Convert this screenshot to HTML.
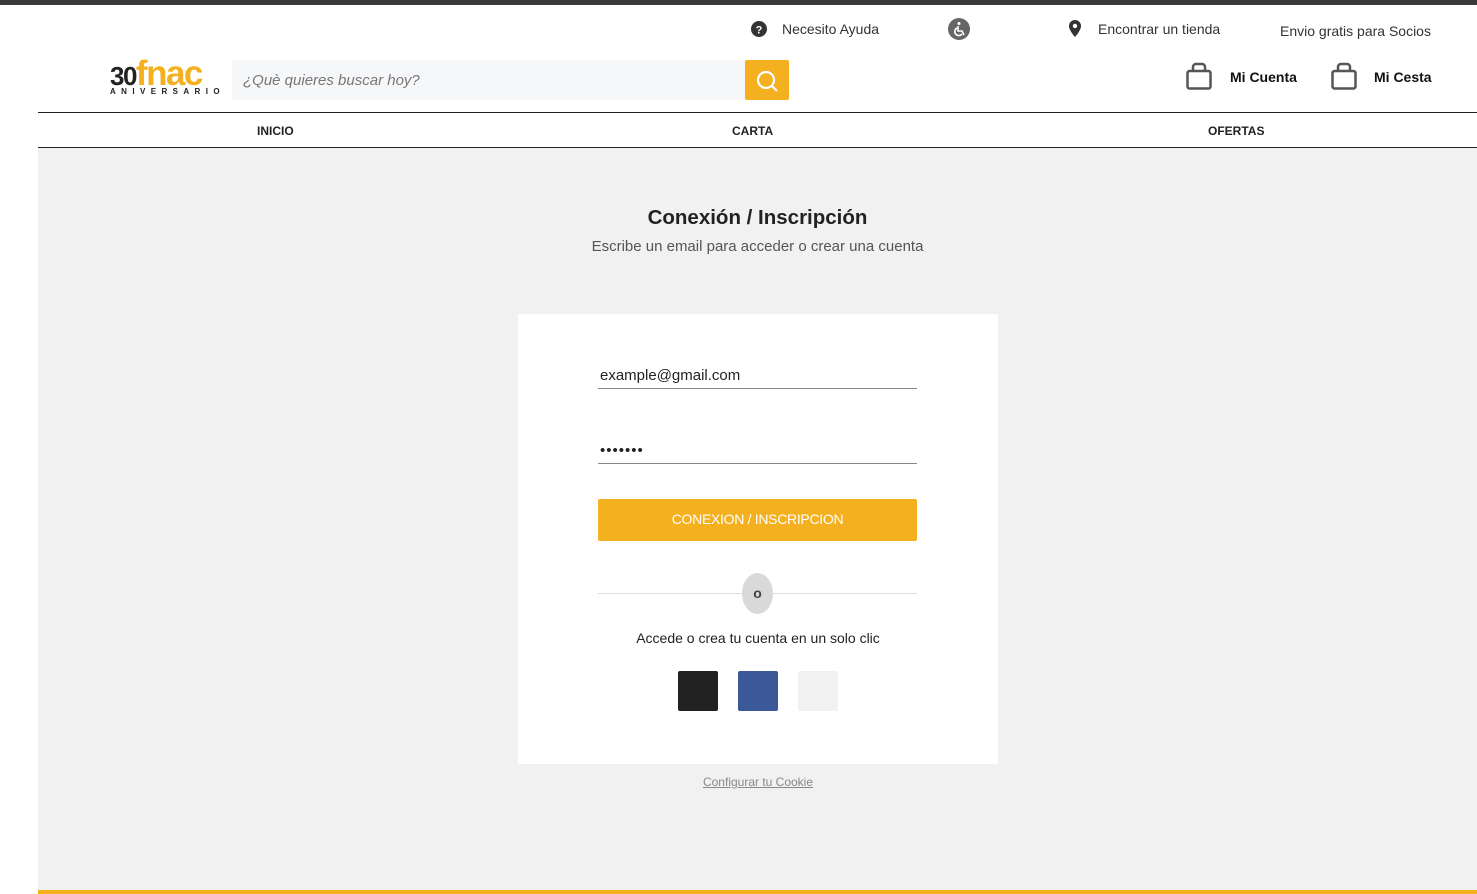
<!DOCTYPE html>
<html><head><meta charset="utf-8"><style>
*{margin:0;padding:0;box-sizing:border-box}
body{width:1477px;height:894px;position:relative;background:#fff;font-family:"Liberation Sans",sans-serif;overflow:hidden;color:#222}
.a{position:absolute}
</style></head><body>
<div class="a" style="left:0;top:0;width:1477px;height:5px;background:#3a3a3a"></div>
<svg class="a" style="left:751px;top:21px" width="16" height="16" viewBox="0 0 16 16"><circle cx="8" cy="8" r="8" fill="#333"/><text x="8" y="12.5" font-size="11" font-weight="bold" fill="#fff" text-anchor="middle" font-family="Liberation Sans">?</text></svg>
<div class="a" style="left:782px;top:21px;font-size:14px;color:#333">Necesito Ayuda</div>
<svg class="a" style="left:948px;top:18px" width="22" height="22" viewBox="0 0 22 22"><circle cx="11" cy="11" r="11" fill="#666"/><circle cx="11" cy="5.5" r="1.5" fill="#fff"/><path d="M10 8v5h4l2 4M9 10a4 4 0 1 0 5 6" stroke="#fff" stroke-width="1.6" fill="none"/></svg>
<svg class="a" style="left:1068px;top:20px" width="14" height="17" viewBox="0 0 14 17"><path d="M7 0a6 6 0 0 0-6 6c0 4.5 6 11 6 11s6-6.5 6-11a6 6 0 0 0-6-6z" fill="#333"/><circle cx="7" cy="6" r="2.2" fill="#fff"/></svg>
<div class="a" style="left:1098px;top:21px;font-size:14px;color:#333">Encontrar un tienda</div>
<div class="a" style="left:1280px;top:23px;font-size:14px;color:#333">Envio gratis para Socios</div>
<div class="a" style="left:110px;top:54px;font-size:35px;font-weight:bold;color:#f5b01f;letter-spacing:-1.5px;line-height:40px"><span style="color:#222;font-size:26px">30</span>fnac</div>
<div class="a" style="left:110px;top:87px;font-size:8px;font-weight:bold;letter-spacing:5.4px;color:#222">ANIVERSARIO</div>
<div class="a" style="left:232px;top:60px;width:514px;height:40px;background:#f6f7f9"></div>
<div class="a" style="left:243px;top:72px;font-size:15px;font-style:italic;color:#777">¿Què quieres buscar hoy?</div>
<div class="a" style="left:745px;top:60px;width:44px;height:40px;background:#f5b01f;border-radius:2px"></div>
<svg class="a" style="left:755px;top:69px" width="24" height="24" viewBox="0 0 24 24"><circle cx="11" cy="11" r="8" stroke="#fff" stroke-width="2.2" fill="none"/><path d="M17 17l5 5" stroke="#fff" stroke-width="2.2"/></svg>
<svg class="a" style="left:1186px;top:62px" width="26" height="28" viewBox="0 0 26 28"><rect x="1.5" y="9" width="23" height="17.5" rx="2" stroke="#555" stroke-width="2.5" fill="none"/><path d="M7 9V5a3 3 0 0 1 3-3h6a3 3 0 0 1 3 3v4" stroke="#555" stroke-width="2.5" fill="none"/></svg>
<div class="a" style="left:1230px;top:69px;font-size:14px;font-weight:bold;color:#111">Mi Cuenta</div>
<svg class="a" style="left:1331px;top:62px" width="26" height="28" viewBox="0 0 26 28"><rect x="1.5" y="9" width="23" height="17.5" rx="2" stroke="#555" stroke-width="2.5" fill="none"/><path d="M7 9V5a3 3 0 0 1 3-3h6a3 3 0 0 1 3 3v4" stroke="#555" stroke-width="2.5" fill="none"/></svg>
<div class="a" style="left:1374px;top:69px;font-size:14px;font-weight:bold;color:#111">Mi Cesta</div>
<div class="a" style="left:38px;top:112px;width:1439px;height:1px;background:#222"></div>
<div class="a" style="left:257px;top:124px;font-size:12px;font-weight:bold;color:#222">INICIO</div>
<div class="a" style="left:732px;top:124px;font-size:12px;font-weight:bold;color:#222">CARTA</div>
<div class="a" style="left:1208px;top:124px;font-size:12px;font-weight:bold;color:#222">OFERTAS</div>
<div class="a" style="left:38px;top:147px;width:1439px;height:1px;background:#222"></div>
<div class="a" style="left:38px;top:148px;width:1439px;height:742px;background:#f1f1f1"></div>
<div class="a" style="left:38px;top:890px;width:1439px;height:4px;background:#f5b01f"></div>
<div class="a" style="left:0;top:206px;width:1515px;text-align:center;font-size:20.5px;font-weight:bold;color:#222">Conexión / Inscripción</div>
<div class="a" style="left:0;top:238px;width:1515px;text-align:center;font-size:15px;color:#555">Escribe un email para acceder o crear una cuenta</div>
<div class="a" style="left:518px;top:314px;width:480px;height:450px;background:#fff"></div>
<div class="a" style="left:600px;top:367px;font-size:15px;color:#222">example@gmail.com</div>
<div class="a" style="left:598px;top:388px;width:319px;height:1px;background:#888"></div>
<div class="a" style="left:600px;top:442px;font-size:15px;color:#222;letter-spacing:1px">•••••••</div>
<div class="a" style="left:598px;top:463px;width:319px;height:1px;background:#888"></div>
<div class="a" style="left:598px;top:499px;width:319px;height:42px;background:#f5b01f;border-radius:2px;color:#fff;font-size:14px;text-align:center;line-height:40px;letter-spacing:-0.3px">CONEXION / INSCRIPCION</div>
<div class="a" style="left:598px;top:593px;width:319px;height:1px;background:#ddd"></div>
<div class="a" style="left:742px;top:573px;width:31px;height:41px;border-radius:50%;background:#d9d9d9;text-align:center;line-height:41px;font-size:14px;font-weight:bold;color:#444">o</div>
<div class="a" style="left:518px;top:630px;width:480px;text-align:center;font-size:14px;color:#222">Accede o crea tu cuenta en un solo clic</div>
<div class="a" style="left:678px;top:671px;width:40px;height:40px;background:#222;border-radius:2px"></div>
<div class="a" style="left:738px;top:671px;width:40px;height:40px;background:#3b5998;border-radius:2px"></div>
<div class="a" style="left:798px;top:671px;width:40px;height:40px;background:#f1f1f1;border-radius:2px"></div>
<div class="a" style="left:518px;top:775px;width:480px;text-align:center;font-size:12px;color:#888;text-decoration:underline">Configurar tu Cookie</div>
</body></html>
